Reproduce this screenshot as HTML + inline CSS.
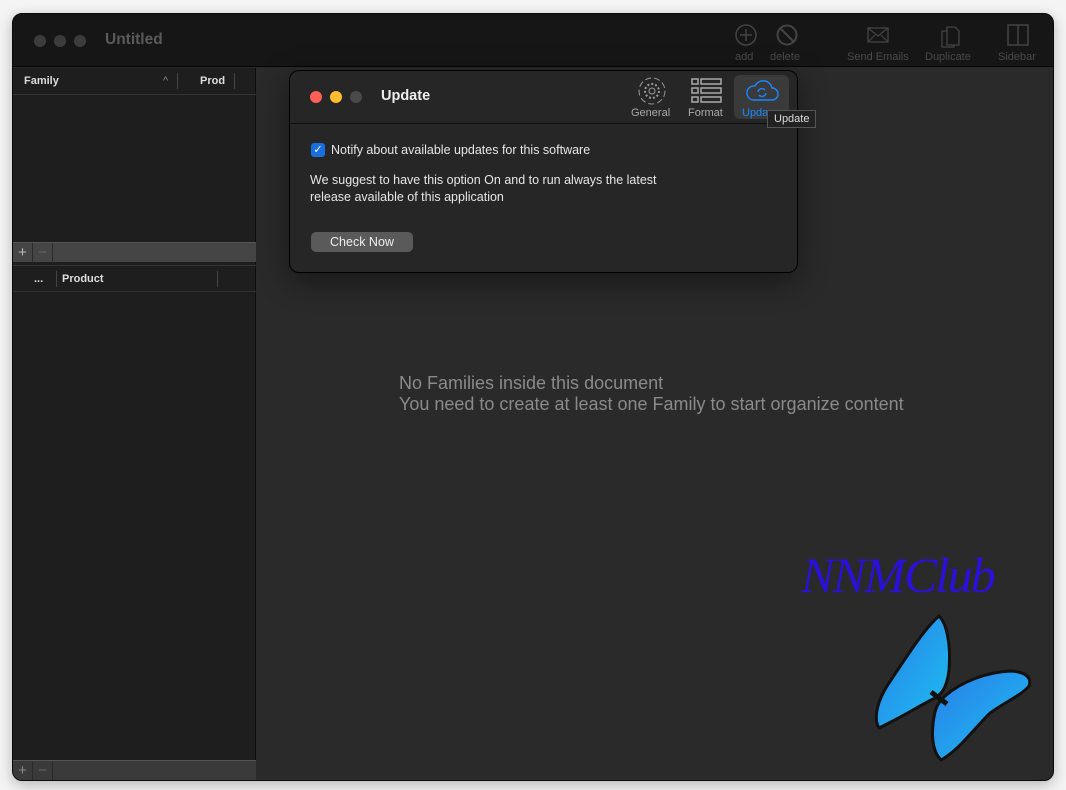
<!DOCTYPE html>
<html><head><meta charset="utf-8"><style>
*{margin:0;padding:0;box-sizing:border-box}
body{width:1066px;height:790px;background:#f4f4f4;font-family:"Liberation Sans",sans-serif;position:relative;overflow:hidden}
.win{position:absolute;left:12px;top:13px;width:1042px;height:768px;border-radius:10px;background:#2a2a2a;overflow:hidden;border:1px solid #0a0a0a;box-shadow:0 4px 14px rgba(0,0,0,.25)}
.tb{position:absolute;left:0;top:0;width:100%;height:53px;background:#161616;border-bottom:1px solid #050505}
.dot{position:absolute;width:12px;height:12px;border-radius:50%;background:#3c3c3c;top:21px}
.ttl{position:absolute;left:92px;top:17px;color:#5a5a5a;font-size:15.5px;font-weight:bold}
.tl{position:absolute;top:37px;color:#4a4a4a;font-size:11px;text-align:center}
.side{position:absolute;left:0;top:54px;width:243px;height:714px;background:#1e1e1e;border-right:1px solid #0c0c0c}
.hd{position:absolute;left:0;width:243px;height:27px;border-bottom:1px solid #333;color:#ddd;font-size:11px;font-weight:bold}
.bar{position:absolute;left:0;width:243px;height:20px;background:#454545;border-top:1px solid #555}
.bar span{position:absolute;top:0;width:20px;height:20px;color:#bbb;font-size:15px;text-align:center;line-height:19px;border-right:1px solid #2a2a2a}
.dlg{position:absolute;left:276px;top:56px;width:509px;height:203px;background:#262626;border:1px solid #000;border-radius:10px;box-shadow:0 8px 30px rgba(0,0,0,.45)}
.dh{height:53px;border-bottom:1px solid #0e0e0e;position:relative}
.dd{position:absolute;width:12px;height:12px;border-radius:50%;top:20px}
.txt{color:#e6e6e6;font-size:12.5px;position:absolute}
.msg{position:absolute;left:386px;top:359px;color:#8a8a8a;font-size:18px;line-height:21px}
</style></head><body>
<div class="win">
 <div class="tb">
  <div class="dot" style="left:21px"></div><div class="dot" style="left:41px"></div><div class="dot" style="left:61px"></div>
  <div class="ttl">Untitled</div>
  <svg style="position:absolute;left:722px;top:10px" width="22" height="22"><circle cx="11" cy="11" r="10" fill="none" stroke="#444" stroke-width="1.5"/><path d="M11 5v12M5 11h12" stroke="#444" stroke-width="1.5"/></svg>
  <svg style="position:absolute;left:763px;top:10px" width="22" height="22"><circle cx="11" cy="11" r="9.5" fill="none" stroke="#444" stroke-width="2"/><path d="M4.5 4.5l13 13" stroke="#444" stroke-width="2"/></svg>
  <svg style="position:absolute;left:854px;top:13px" width="22" height="16"><rect x="1" y="1" width="20" height="14" fill="none" stroke="#444" stroke-width="1.3"/><path d="M1 1l10 8 10-8M1 15l7-7M21 15l-7-7" stroke="#444" fill="none" stroke-width="1.2"/></svg>
  <svg style="position:absolute;left:926px;top:9px" width="24" height="26"><path d="M8 4h8l4 4v14H8z M3 8h5M3 8v16h12v-2" fill="none" stroke="#444" stroke-width="1.3"/></svg>
  <svg style="position:absolute;left:994px;top:10px" width="22" height="22"><rect x="1" y="1" width="20" height="20" fill="none" stroke="#444" stroke-width="1.5"/><path d="M11 1v20" stroke="#444" stroke-width="1.5"/></svg>
  <div class="tl" style="left:722px">add</div><div class="tl" style="left:757px">delete</div><div class="tl" style="left:834px">Send Emails</div><div class="tl" style="left:912px">Duplicate</div><div class="tl" style="left:985px">Sidebar</div>
 </div>
 <div class="side">
  <div class="hd" style="top:0"><span style="position:absolute;left:11px;top:7px">Family</span><span style="position:absolute;left:150px;top:7px;color:#888;font-weight:normal">^</span><span style="position:absolute;left:164px;top:5px;height:16px;border-left:1px solid #444"></span><span style="position:absolute;left:187px;top:7px">Prod</span><span style="position:absolute;left:221px;top:5px;height:16px;border-left:1px solid #444"></span></div>
  <div class="bar" style="top:174px"><span style="left:0">+</span><span style="left:20px;color:#666">−</span></div>
  <div class="hd" style="top:197px;border-top:1px solid #333"><span style="position:absolute;left:21px;top:7px">...</span><span style="position:absolute;left:43px;top:5px;height:16px;border-left:1px solid #444"></span><span style="position:absolute;left:49px;top:7px">Product</span><span style="position:absolute;left:204px;top:5px;height:16px;border-left:1px solid #444"></span></div>
  <div class="bar" style="top:692px;background:#3a3a3a"><span style="left:0;color:#888">+</span><span style="left:20px;color:#666">−</span></div>
 </div>
 <div class="msg">No Families inside this document<br>You need to create at least one Family to start organize content</div>
 <div style="position:absolute;left:788px;top:532px;color:#2a10d8;font-family:'Liberation Serif',serif;font-style:italic;font-size:50px;letter-spacing:-1.8px">NNMClub</div>
 <svg style="position:absolute;left:848px;top:586px" width="175" height="165" viewBox="0 0 175 165">
  <defs><linearGradient id="g" x1="0" y1="0" x2="1" y2="1"><stop offset="0" stop-color="#2a7de8"/><stop offset="1" stop-color="#1cc0f0"/></linearGradient></defs>
  <path d="M78 16C86 24 90 45 88 70C86 88 80 96 70 100C55 108 35 120 18 128C12 118 16 100 30 80C45 58 62 30 78 16Z" fill="url(#g)" stroke="#111" stroke-width="3"/>
  <path d="M84 96C100 82 125 72 150 71C165 72 171 78 168 86C160 96 140 104 128 114C112 130 98 150 80 160C70 150 70 130 74 112C76 104 80 100 84 96Z" fill="url(#g)" stroke="#111" stroke-width="3"/>
  <path d="M70 92L86 104" stroke="#111" stroke-width="5"/>
 </svg>
 <div class="dlg">
  <div class="dh">
   <div class="dd" style="left:20px;background:#fe5f57"></div><div class="dd" style="left:40px;background:#febc2e"></div><div class="dd" style="left:60px;background:#4a4a4a"></div>
   <div style="position:absolute;left:91px;top:17px;color:#eee;font-size:14.5px;font-weight:bold">Update</div>
   <svg style="position:absolute;left:347px;top:5px" width="30" height="30"><circle cx="15" cy="15" r="13" fill="none" stroke="#999" stroke-dasharray="6 3"/><circle cx="15" cy="15" r="7" fill="none" stroke="#999" stroke-dasharray="2 2" stroke-width="2"/><circle cx="15" cy="15" r="3" fill="none" stroke="#999"/></svg>
   <svg style="position:absolute;left:401px;top:7px" width="32" height="26" fill="none" stroke="#aaa" stroke-width="1.5"><rect x="1" y="1" width="6" height="5"/><rect x="10" y="1" width="20" height="5"/><rect x="1" y="10" width="6" height="5"/><rect x="10" y="10" width="20" height="5"/><rect x="1" y="19" width="6" height="5"/><rect x="10" y="19" width="20" height="5"/></svg>
   <div style="position:absolute;left:444px;top:4px;width:55px;height:44px;background:#3a3a3a;border-radius:6px"></div>
   <svg style="position:absolute;left:455px;top:8px" width="34" height="24" fill="none" stroke="#1a86ff" stroke-width="1.4"><path d="M8 21H27a6 6 0 0 0 0-12 9 9 0 0 0-17-2 7 7 0 0 0-2 14z"/><path d="M13 13a4 4 0 0 1 7-2M21 14a4 4 0 0 1-7 2"/></svg>
   <div style="position:absolute;left:341px;top:36px;color:#aaa;font-size:11px">General</div>
   <div style="position:absolute;left:398px;top:36px;color:#aaa;font-size:11px">Format</div>
   <div style="position:absolute;left:452px;top:36px;color:#1a86ff;font-size:11px">Upda</div>
  </div>
  <div style="position:absolute;left:21px;top:72px;width:14px;height:14px;background:#1a6fe0;border-radius:3px;color:#fff;font-size:11px;text-align:center;line-height:14px">✓</div>
  <div class="txt" style="left:41px;top:72px">Notify about available updates for this software</div>
  <div class="txt" style="left:20px;top:101px;line-height:17px">We suggest to have this option On and to run always the latest<br>release available of this application</div>
  <div style="position:absolute;left:21px;top:161px;width:102px;height:20px;background:#5a5a5a;border-radius:5px;color:#eee;font-size:12.5px;text-align:center;line-height:20px">Check Now</div>
 </div>
 <div style="position:absolute;left:754px;top:96px;padding:2px 6px;background:#222;border:1px solid #555;color:#ddd;font-size:11px">Update</div>
</div>
</body></html>
